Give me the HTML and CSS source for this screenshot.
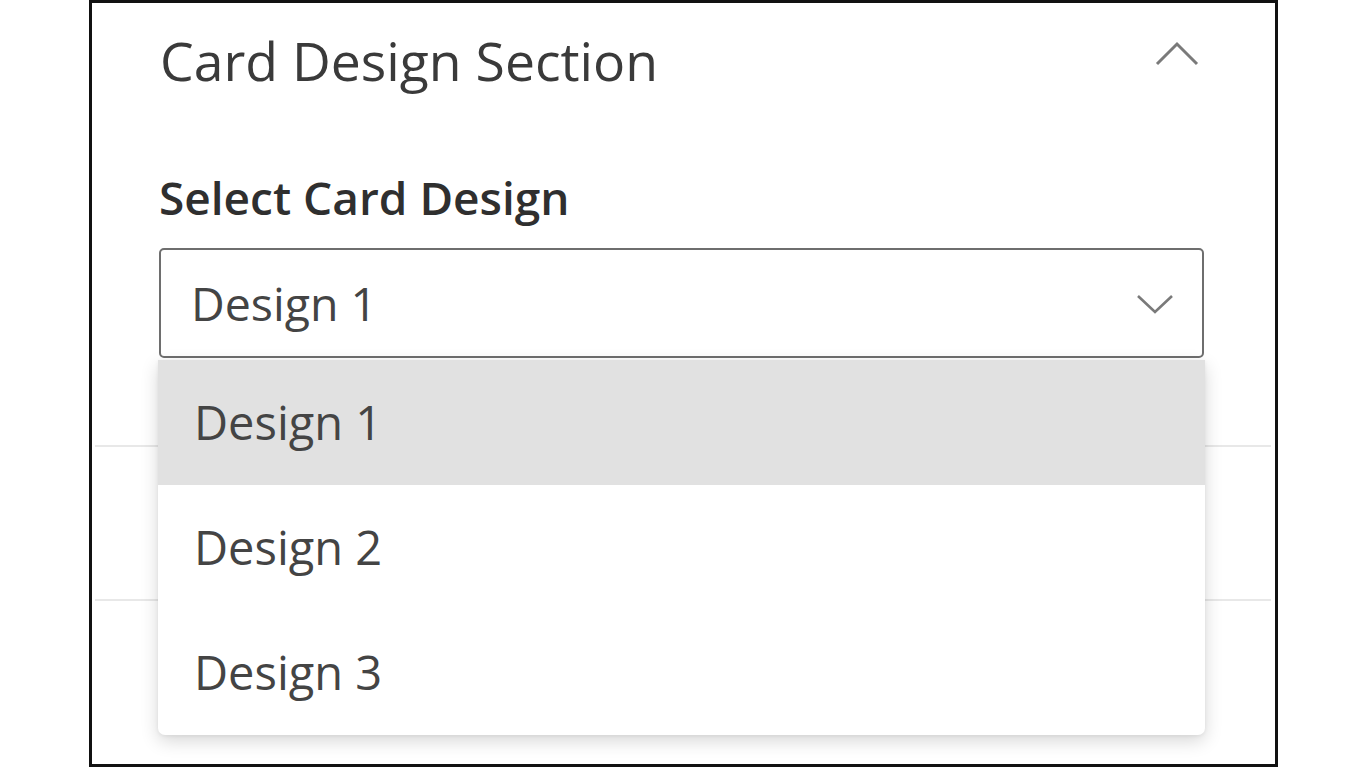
FILE: index.html
```html
<!DOCTYPE html>
<html lang="en">
<head>
<meta charset="utf-8">
<title>Card Design Section</title>
<link rel="stylesheet" href="styles.css">
</head>
<body>
<div class="frame">
  <div class="accordion">
    <section class="item item-open">
      <header class="item-header">
        <h2 class="item-title">Card Design Section</h2>
        <svg class="chevron-up" width="44" height="26" viewBox="0 0 44 26" aria-hidden="true">
          <polyline points="2,23 22,3 42,23" fill="none" stroke="#7a7a7a" stroke-width="3"/>
        </svg>
      </header>
      <div class="field">
        <label class="field-label">Select Card Design</label>
        <div class="select-wrap">
          <div class="select-box">
            <span class="select-value">Design 1</span>
            <svg class="chevron-down" width="38" height="22" viewBox="0 0 38 22" aria-hidden="true">
              <polyline points="2,3 19,19 36,3" fill="none" stroke="#7a7a7a" stroke-width="2.6"/>
            </svg>
          </div>
          <ul class="menu">
            <li class="option option-active">Design 1</li>
            <li class="option">Design 2</li>
            <li class="option">Design 3</li>
          </ul>
        </div>
      </div>
    </section>
    <section class="item item-collapsed"></section>
    <section class="item item-collapsed item-last"></section>
  </div>
</div>
</body>
</html>
```

FILE: styles.css
```css
html, body {
  margin: 0;
  padding: 0;
  background: #ffffff;
}

body {
  font-family: "Open Sans", "Noto Sans", sans-serif;
  color: #333333;
}

.frame {
  box-sizing: border-box;
  margin-left: 89px;
  width: 1189px;
  height: 767px;
  border: 3px solid #111111;
  overflow: hidden;
  background: #ffffff;
}

.accordion {
  display: flex;
  flex-direction: column;
}

.item {
  margin: 0 4px 0 3px;
  border-bottom: 2px solid #e8e8e8;
}

.item-open {
  box-sizing: border-box;
  height: 444px;
  padding: 22px 67px 0 64px;
}

.item-collapsed {
  box-sizing: border-box;
  height: 154px;
}

.item-last {
  border-bottom: none;
}

.item-header {
  display: flex;
  align-items: center;
  justify-content: space-between;
  height: 72px;
}

.item-title {
  margin: 0 0 0 1px;
  font-size: 53.5px;
  font-weight: 400;
  line-height: 72px;
  color: #3a3a3a;
}

.chevron-up {
  display: block;
  margin-right: 5px;
  margin-bottom: 14px;
}

.field {
  margin-top: 70px;
}

.field-label {
  display: block;
  font-size: 46px;
  font-weight: 600;
  line-height: 60px;
  color: #2f2f2f;
}

.select-wrap {
  position: relative;
  margin-top: 21px;
}

.select-box {
  box-sizing: border-box;
  display: flex;
  align-items: center;
  justify-content: space-between;
  height: 110px;
  padding: 0 28px 0 30px;
  border: 2px solid #6e6e6e;
  border-radius: 5px;
  background: #ffffff;
}

.select-value {
  font-size: 46.5px;
  line-height: 106px;
  padding-top: 0;
  color: #444444;
}

.chevron-down {
  display: block;
  margin-right: 0;
  margin-top: 2px;
}

.menu {
  position: absolute;
  left: -1px;
  right: -1px;
  top: 112px;
  margin: 0;
  padding: 0;
  list-style: none;
  background: #ffffff;
  border-radius: 0 0 7px 7px;
  box-shadow: 0 6px 18px rgba(0, 0, 0, 0.16), 0 1px 4px rgba(0, 0, 0, 0.06);
  overflow: hidden;
}

.option {
  height: 125px;
  padding-left: 36px;
  font-size: 47px;
  line-height: 125px;
  color: #444444;
}

.option-active {
  background: #e1e1e1;
}
```
